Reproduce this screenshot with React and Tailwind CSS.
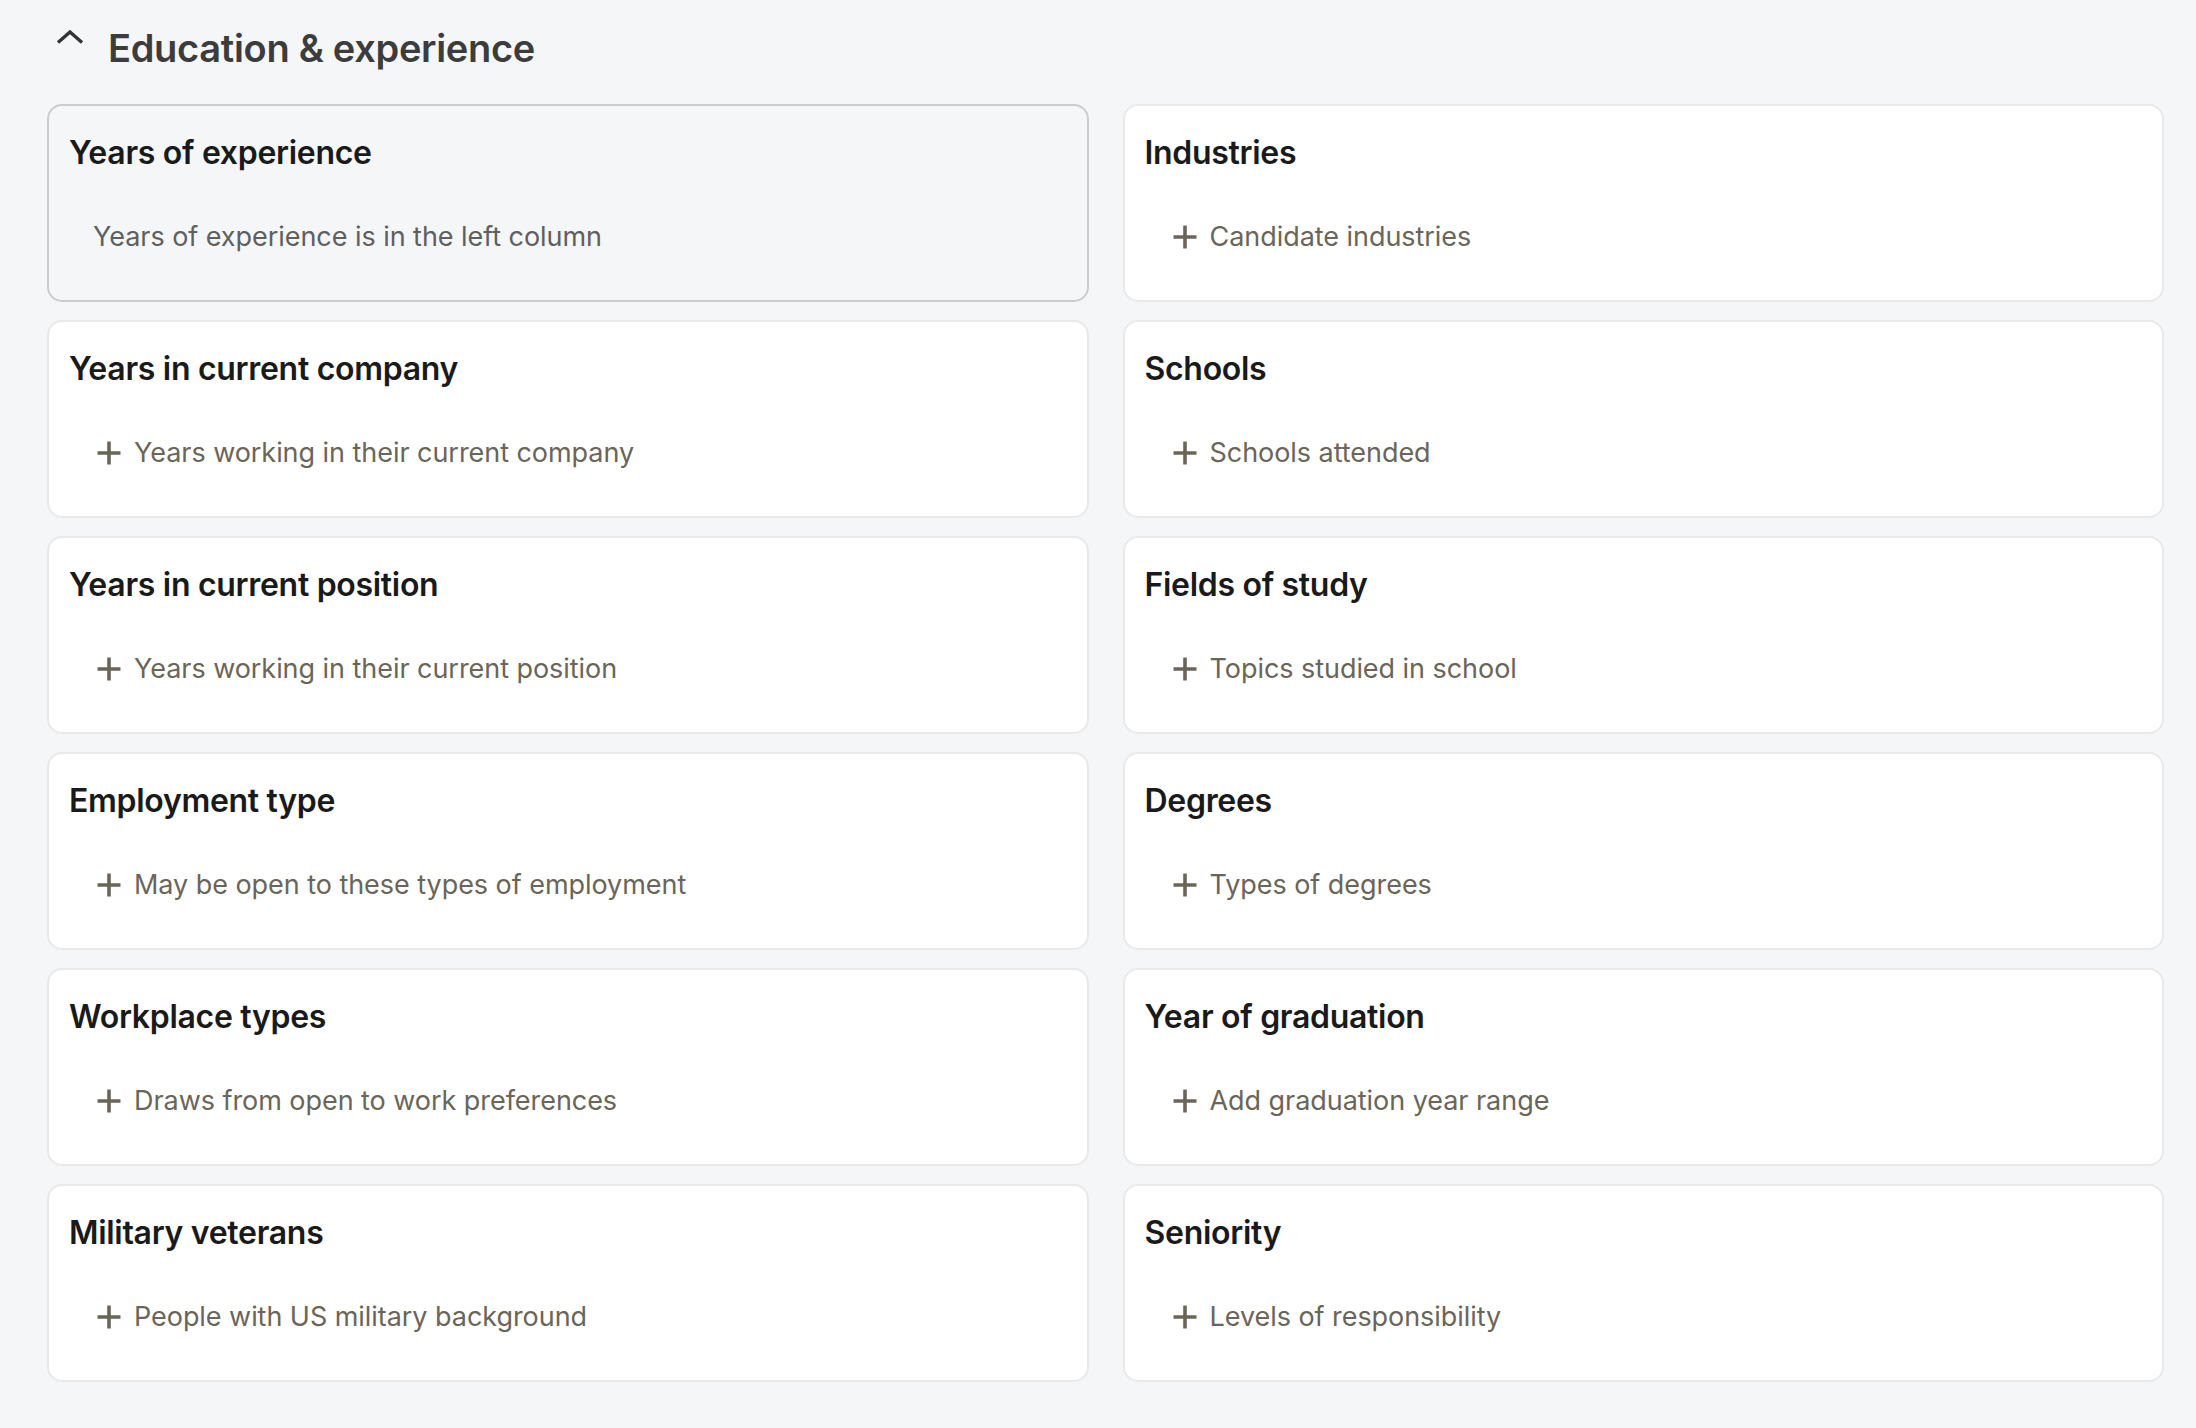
import React from "react";

const left = [
  { title: "Years of experience", sub: "Years of experience is in the left column", disabled: true },
  { title: "Years in current company", sub: "Years working in their current company" },
  { title: "Years in current position", sub: "Years working in their current position" },
  { title: "Employment type", sub: "May be open to these types of employment" },
  { title: "Workplace types", sub: "Draws from open to work preferences" },
  { title: "Military veterans", sub: "People with US military background" },
];
const right = [
  { title: "Industries", sub: "Candidate industries" },
  { title: "Schools", sub: "Schools attended" },
  { title: "Fields of study", sub: "Topics studied in school" },
  { title: "Degrees", sub: "Types of degrees" },
  { title: "Year of graduation", sub: "Add graduation year range" },
  { title: "Seniority", sub: "Levels of responsibility" },
];

function Plus() {
  return (
    <svg width="24" height="24" viewBox="0 0 24 24" className="shrink-0">
      <path d="M12 0.5v23M0.5 12h23" stroke="#6b6559" strokeWidth="3.6" fill="none" />
    </svg>
  );
}

function Card({ title, sub, disabled }) {
  return (
    <div
      className={
        "h-[198px] rounded-[15px] border-[2px] pl-[20px] pr-6 pt-[27px] flex flex-col " +
        (disabled ? "bg-[#f5f6f8] border-[#cbccce]" : "bg-white border-[#e9e9ea]")
      }
    >
      <div className="text-[32px] leading-[40px] font-semibold text-[#1a1a1a] tracking-[-0.3px]">{title}</div>
      {disabled ? (
        <div className="mt-[46px] ml-[24px] text-[27px] leading-[36px] text-[#5f5f5f] tracking-[-0.05px]">{sub}</div>
      ) : (
        <div className="mt-[46px] ml-[28px] flex items-center gap-[13px]">
          <Plus />
          <span className="text-[27px] leading-[36px] text-[#6b6559] tracking-[-0.05px]">{sub}</span>
        </div>
      )}
    </div>
  );
}

export default function App() {
  return (
    <div
      className="min-h-screen bg-[#f5f6f8] pl-[47px] pr-[32px] pb-[45px]"
      style={{ fontFamily: "Inter, 'Noto Sans', sans-serif" }}
    >
      <div className="h-[96px] flex items-center">
        <svg width="28" height="14" viewBox="0 0 28 14" className="ml-[9px] -mt-[22px]">
          <path d="M2 12.5L14 2l12 10.5" stroke="#333" strokeWidth="3.4" fill="none" strokeLinejoin="miter" />
        </svg>
        <h1 className="ml-[24px] text-[38px] leading-[48px] font-semibold text-[#3c3c3c] tracking-[-0.3px]">
          Education &amp; experience
        </h1>
      </div>
      <div className="mt-[8px] grid grid-cols-2 gap-x-[34px] gap-y-[18px]">
        {left.map((l, i) => (
          <React.Fragment key={i}>
            <Card {...l} />
            <Card {...right[i]} />
          </React.Fragment>
        ))}
      </div>
    </div>
  );
}
